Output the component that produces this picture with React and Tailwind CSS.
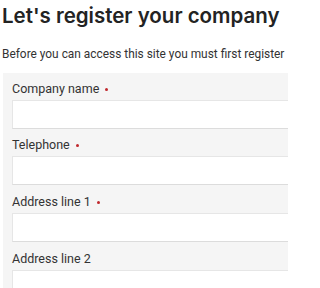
export default function App() {
  const fields = [
    { label: "Company name", req: true },
    { label: "Telephone", req: true },
    { label: "Address line 1", req: true },
    { label: "Address line 2", req: false },
  ];
  return (
    <div className="w-[288px] h-[288px] overflow-hidden bg-white text-[#222]" style={{ fontFamily: "Roboto, 'Liberation Sans', sans-serif" }}>
      <div className="pl-[2px]">
        <h1 className="text-[20.5px] leading-[26px] font-semibold whitespace-nowrap pt-[3px] text-[#232323]" style={{ fontFamily: "Inter, sans-serif" }}>Let's register your company</h1>
        <p className="text-[11.9px] leading-[16px] whitespace-nowrap mt-[17px] text-[#333]">Before you can access this site you must first register</p>
        <div className="mt-[10.5px] ml-[1px] bg-[#f5f5f5] w-[300px] pl-[9px] pt-[8px] pb-[10px]">
          {fields.map((f) => (
            <div key={f.label} className="mb-[8.7px]">
              <div className="flex items-center gap-[6px] h-[17px] text-[12.5px] text-[#333] whitespace-nowrap">
                <span>{f.label}</span>
                {f.req && <span className="w-[3px] h-[3px] rounded-full bg-[#c0282d]" />}
              </div>
              <div className="mt-[2px] h-[29px] bg-white border border-[#e6e6e6] border-b-[#dcdcdc]" />
            </div>
          ))}
        </div>
      </div>
    </div>
  );
}
